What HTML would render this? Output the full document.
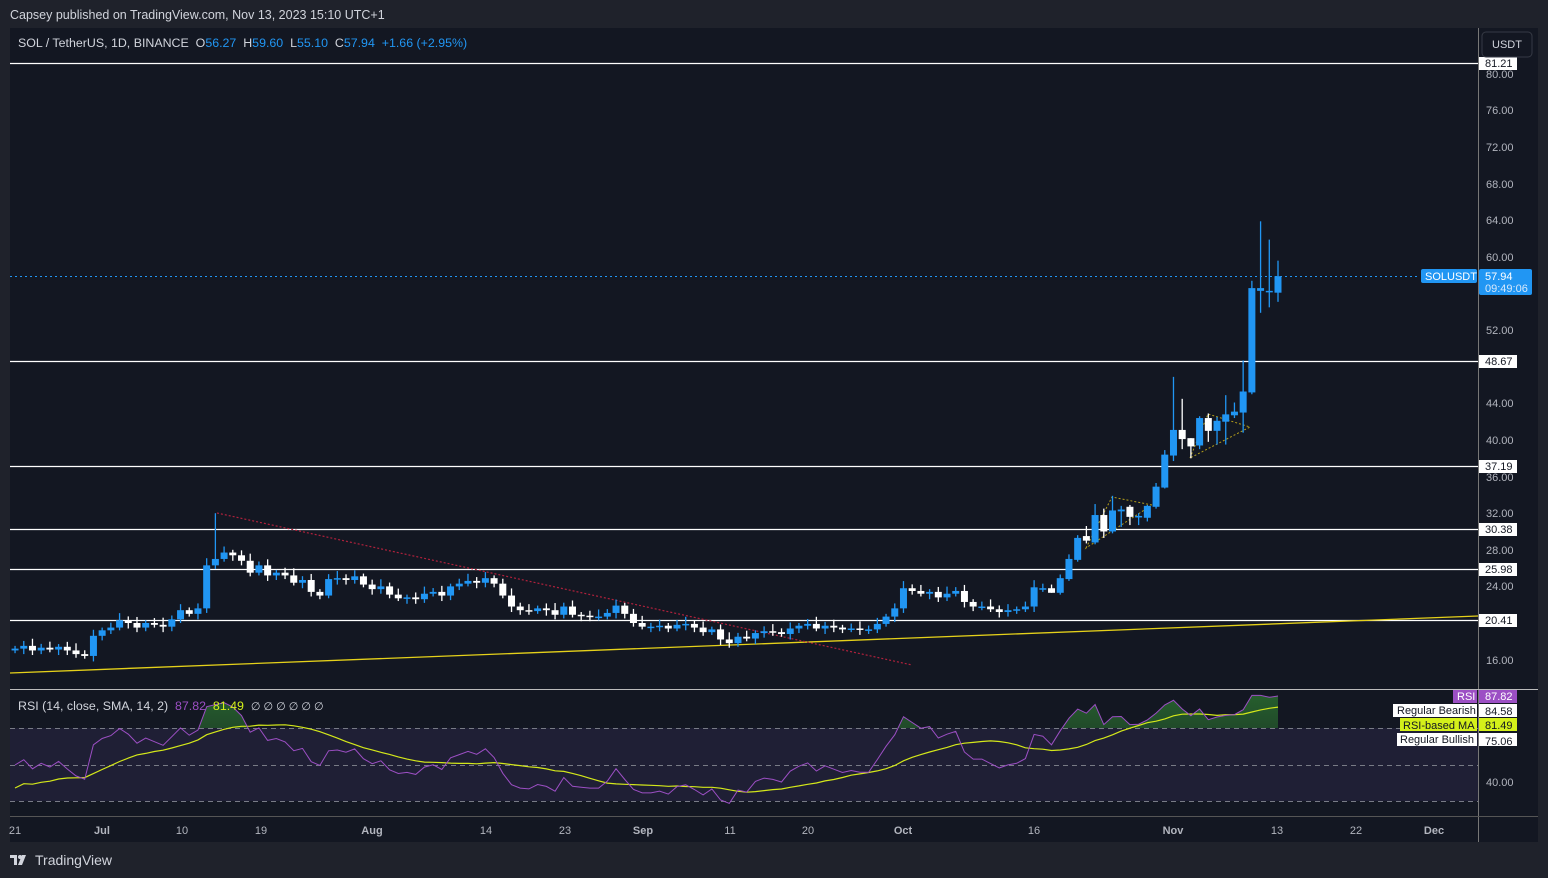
<!DOCTYPE html>
<html><head><meta charset="utf-8"><style>
html,body{margin:0;padding:0;background:#1f222b;width:1548px;height:878px;overflow:hidden;font-family:"Liberation Sans",sans-serif}
#top{position:absolute;left:10px;top:8px;color:#d1d4dc;font-size:12.5px}
#bot{position:absolute;left:10px;top:852px;color:#d1d4dc;font-size:14px;display:flex;align-items:center;gap:5px}
svg{position:absolute;left:0;top:0}
</style></head><body>
<div id="top">Capsey published on TradingView.com, Nov 13, 2023 15:10 UTC+1</div>
<div id="bot"><svg style="position:static" width="20" height="14" viewBox="0 0 20 14"><path d="M0 2h7v10H4V5H0z M8 12l4-10h4l-4 10z" fill="#d1d4dc"/><circle cx="10" cy="4" r="2" fill="#d1d4dc"/></svg><span>TradingView</span></div>
<svg id="s" width="1548" height="878" xmlns="http://www.w3.org/2000/svg"></svg>
<script>
const S=document.getElementById('s');let h='';
h+='<rect x="10" y="28" width="1528" height="814" fill="#131722"/>';
h+='<line x1="1478.5" y1="28" x2="1478.5" y2="842" stroke="#777" stroke-width="1"/>';
h+='<line x1="10" y1="689.5" x2="1538" y2="689.5" stroke="#bbb"/>';
h+='<line x1="10" y1="816.5" x2="1538" y2="816.5" stroke="#555"/>';
const Y=p=>257+(60-p)*9.15;
const RY=r=>765-(r-50)*1.825;
h+='<rect x="10" y="728" width="1468" height="73" fill="#1f1f35"/>';
[728,765,801].forEach(y=>h+=`<line x1="10" y1="${y}.5" x2="1478" y2="${y}.5" stroke="#787b86" stroke-dasharray="5,4"/>`);
[63,361,466,529,569,620].forEach(y=>h+=`<line x1="10" y1="${y}.5" x2="1478" y2="${y}.5" stroke="#fff" stroke-width="1.3"/>`);
h+='<line x1="10" y1="673" x2="1478" y2="616" stroke="#e5d11a" stroke-width="1.3"/>';
h+='<line x1="217" y1="513" x2="912" y2="665" stroke="#b0213c" stroke-width="1.2" stroke-dasharray="2,2"/>';
h+='<path d="M1086 548L1112 497L1152 505Z M1190 458L1208 414L1250 427Z" fill="none" stroke="#b59f1a" stroke-width="1" stroke-dasharray="2,2"/>';
h+='<line x1="10" y1="276.5" x2="1420" y2="276.5" stroke="#2196f3" stroke-dasharray="2,3"/>';
const early=[17.2,17.5,17.0,17.3,17.1,17.4,17.0,16.6,16.4,18.6,
19.2,19.5,20.3,20.0,19.5,20.0,19.8,19.6,20.4,21.4,21.0,21.6,26.3,27.0,27.7,27.4,26.8,25.5,26.3,25.2,25.5,25.2,24.4,24.7,23.4,23.0,24.8,24.9,24.7,25.1,24.2,
23.7,24.0,23.1,22.7,22.8,22.6,23.2,23.4,23.0,24.0,24.3,24.6,24.4,24.9,24.3,23.0,21.8,21.4,21.3,21.6,21.4,20.9,21.8,20.9,20.8,20.7,20.7,21.1,21.9,21.0,20.0,
19.6,19.6,19.7,19.4,19.8,19.9,19.5,19.0,19.3,18.2,17.8,18.5,18.3,18.9,19.1,19.0,18.8,19.4,19.7,19.9,19.4,19.7,19.5,19.3,19.4,19.3,19.3,19.9,20.7,21.6,
23.8,23.5,23.2,23.4,22.8,23.2,23.5,22.3,21.8,21.8,21.5,21.2,21.4,21.5,21.8,23.9];
let C=[];let prev=17.0;
early.forEach((c,i)=>{let o=prev;let hi=Math.max(o,c)+0.3+((i*7)%5)*0.12,lo=Math.min(o,c)-0.3-((i*3)%4)*0.1;if(i==23)hi=32;C.push([o,hi,lo,c]);prev=c;});
const tail=[[23.8,24.3,23.4,23.8],[23.8,24.2,23.3,23.3],[23.3,25.3,23.1,24.9],[24.8,27.5,24.6,27.0],[26.9,29.6,26.7,29.3],[29.5,30.6,28.7,29.0],[28.8,33.0,28.6,31.8],[31.8,32.5,29.3,30.0],[30.0,33.9,29.8,32.3],[32.2,32.8,30.5,32.4],[32.7,32.9,30.7,31.6],[31.7,32.0,30.7,31.7],[31.5,32.9,31.1,32.8],[32.7,35.3,32.5,34.9],[34.8,38.9,34.7,38.4],[38.3,46.9,37.7,41.1],[41.1,44.5,39.0,40.1],[40.2,40.2,38.0,39.3],[39.4,42.6,39.0,42.4],[42.4,42.9,39.8,41.0],[41.0,42.5,39.5,42.1],[42.0,44.9,39.5,42.8],[42.7,44.1,42.4,43.1],[43.0,48.7,40.8,45.3],[45.2,57.4,45.0,56.6],[56.3,63.9,53.9,56.6],[56.3,61.9,54.5,56.3],[56.1,59.6,55.1,57.9]];
C=C.concat(tail);
const N=C.length,x0=1278-(N-1)*8.71;
C.forEach((k,i)=>{const x=x0+i*8.71;const up=k[3]>=k[0];const col=up?'#2196f3':'#ffffff';
let yt=Y(Math.max(k[0],k[3])),yb=Y(Math.min(k[0],k[3]));if(yb-yt<1.5)yb=yt+1.5;
h+=`<line x1="${x}" y1="${Y(k[1])}" x2="${x}" y2="${Y(k[2])}" stroke="${col}" stroke-width="1.3"/>`;
h+=`<rect x="${x-3.5}" y="${yt}" width="7" height="${yb-yt}" fill="${col}"/>`;});
let ag=0.2,al=0.2,rsi=[];
for(let i=0;i<N;i++){const d=i?C[i][3]-C[i-1][3]:0;ag=(ag*13+Math.max(d,0))/14;al=(al*13+Math.max(-d,0))/14;rsi.push(100-100/(1+ag/al));}
rsi[N-1]=87.82;
let ma=rsi.map((v,i)=>{let s=0,n=0;for(let j=Math.max(0,i-13);j<=i;j++){s+=rsi[j];n++;}return s/n;});
for(let i=0;i<14;i++){ma[i]=ma[i]-(14-i)*0.9;}
let pr='',pm='';rsi.forEach((v,i)=>{const x=x0+i*8.71;pr+=(i?'L':'M')+x.toFixed(1)+' '+RY(v).toFixed(1);pm+=(i?'L':'M')+x.toFixed(1)+' '+RY(ma[i]).toFixed(1);});
h+=`<defs><linearGradient id="g" x1="0" y1="0" x2="0" y2="1"><stop offset="0" stop-color="#2e7d32" stop-opacity=".7"/><stop offset="1" stop-color="#2e7d32" stop-opacity=".05"/></linearGradient><clipPath id="cp"><rect x="0" y="0" width="1548" height="728"/></clipPath></defs>`;
h+=`<path d="${pr}L${x0+(N-1)*8.71} 728L${x0} 728Z" fill="url(#g)" clip-path="url(#cp)"/>`;
h+=`<path d="${pm}" fill="none" stroke="#d4e81a" stroke-width="1.2"/>`;
h+=`<path d="${pr}" fill="none" stroke="#9c4fc4" stroke-width="1"/>`;
const t=(x,y,s,c,a,w,fs)=>`<text x="${x}" y="${y}" fill="${c}" font-size="${fs||11}" text-anchor="${a||'start'}" font-weight="${w||'normal'}">${s}</text>`;
[[80,74],[76,110],[72,147],[68,184],[64,220],[60,257],[52,330],[44,403],[40,440],[36,477],[32,513],[28,550],[24,586],[16,660]].forEach(a=>h+=t(1486,a[1]+4,a[0].toFixed(2),'#b2b5be'));
h+=t(1486,786,'40.00','#b2b5be');
[[63,'81.21'],[361,'48.67'],[466,'37.19'],[529,'30.38'],[569,'25.98'],[620,'20.41']].forEach(a=>{h+=`<rect x="1479" y="${a[0]-6}" width="38" height="13" fill="#fff"/>`+t(1485,a[0]+4,a[1],'#131722');});
h+='<rect x="1421" y="269" width="56" height="14" rx="2" fill="#2196f3"/>'+t(1425,280,'SOLUSDT','#fff');
h+='<rect x="1479" y="269" width="53" height="26" rx="2" fill="#2196f3"/>'+t(1485,280,'57.94','#fff')+t(1485,292,'09:49:06','#d6e8fb');
h+='<rect x="1482" y="32" width="50" height="25" rx="4" fill="#131722" stroke="#363a45"/>'+t(1507,48,'USDT','#d1d4dc','middle');
h+='<rect x="1453" y="690" width="24" height="13" fill="#9c4fc4"/>'+t(1457,700,'RSI','#fff');
h+='<rect x="1479" y="690" width="38" height="13" fill="#9c4fc4"/>'+t(1485,700,'87.82','#fff');
h+='<rect x="1393" y="704" width="84" height="13" fill="#fff"/>'+t(1397,714,'Regular Bearish','#131722');
h+='<rect x="1479" y="704" width="38" height="13" fill="#fff"/>'+t(1485,715,'84.58','#131722');
h+='<rect x="1400" y="718" width="77" height="13" fill="#d4f01a"/>'+t(1403,729,'RSI-based MA','#131722');
h+='<rect x="1479" y="718" width="38" height="13" fill="#d4f01a"/>'+t(1485,729,'81.49','#131722');
h+='<rect x="1397" y="733" width="80" height="13" fill="#fff"/>'+t(1400,743,'Regular Bullish','#131722');
h+='<rect x="1479" y="733" width="38" height="13" fill="#fff"/>'+t(1485,745,'75.06','#131722');
[[15,'21'],[102,'Jul',1],[182,'10'],[261,'19'],[372,'Aug',1],[486,'14'],[565,'23'],[643,'Sep',1],[730,'11'],[808,'20'],[903,'Oct',1],[1034,'16'],[1173,'Nov',1],[1277,'13'],[1356,'22'],[1434,'Dec',1]].forEach(a=>h+=t(a[0],834,a[1],'#b2b5be','middle',a[2]?'bold':'normal'));
h+=`<text x="18" y="47" font-size="12.4" fill="#d1d4dc">SOL / TetherUS, 1D, BINANCE&#160; O<tspan fill="#2196f3">56.27</tspan>&#160; H<tspan fill="#2196f3">59.60</tspan>&#160; L<tspan fill="#2196f3">55.10</tspan>&#160; C<tspan fill="#2196f3">57.94</tspan>&#160; <tspan fill="#2196f3">+1.66 (+2.95%)</tspan></text>`;
h+=`<text x="18" y="710" font-size="12.4" fill="#d1d4dc">RSI (14, close, SMA, 14, 2)&#160; <tspan fill="#9c4fc4">87.82</tspan>&#160; <tspan fill="#d4f01a">81.49</tspan>&#160; <tspan font-size="11">∅ ∅ ∅ ∅ ∅ ∅</tspan></text>`;
S.innerHTML=h;
</script>
</body></html>
